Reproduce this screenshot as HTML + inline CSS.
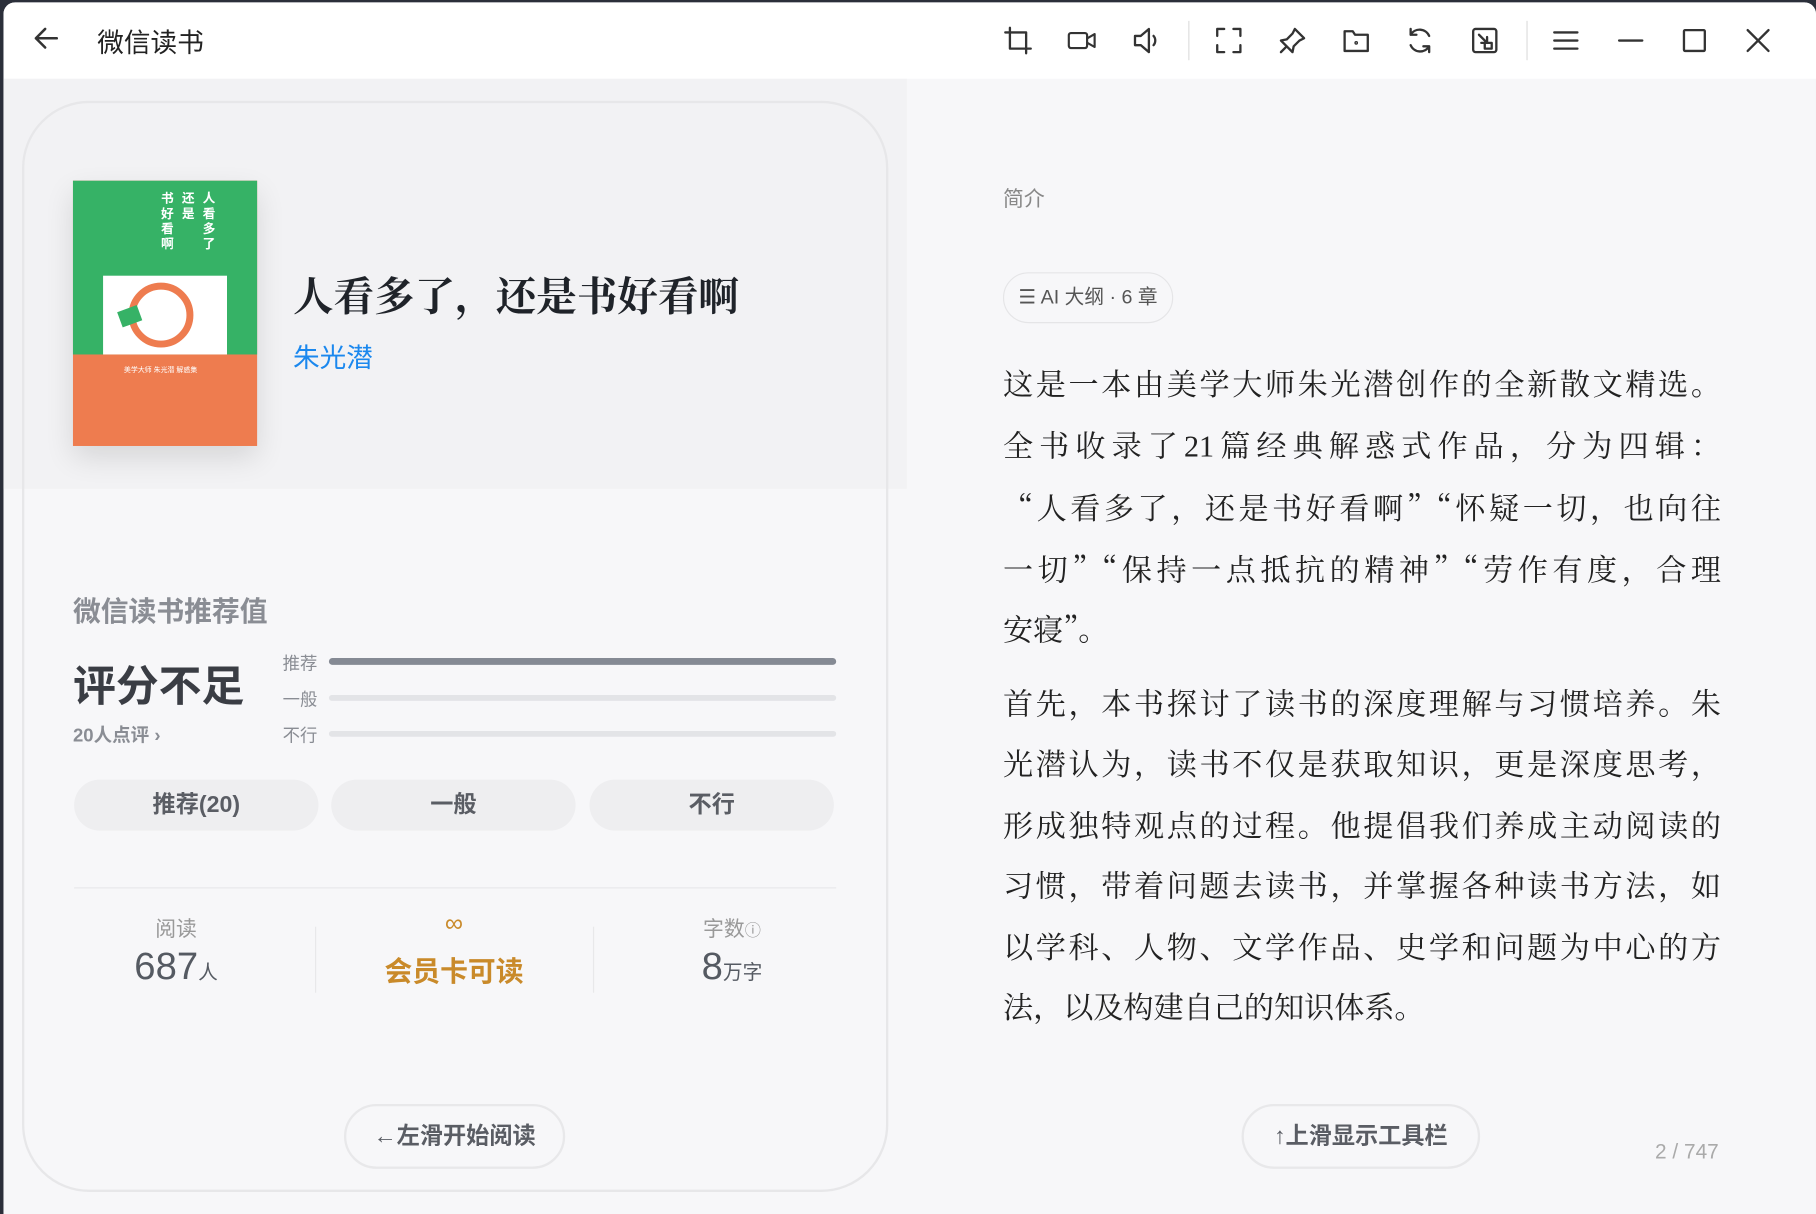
<!DOCTYPE html>
<html><head><meta charset="utf-8"><style>
*{margin:0;padding:0;box-sizing:border-box}
html,body{width:1816px;height:1214px;overflow:hidden;background:#2b2f3a}
#w{position:absolute;left:0;top:0;width:1568px;height:1048px;transform:scale(1.15816,1.15840);transform-origin:0 0;font-family:"Liberation Sans","Noto Sans CJK SC",sans-serif}
.win{position:absolute;left:3px;top:2px;width:1565px;height:1046px;background:#f7f7f9;border-radius:10px 10px 0 0;overflow:hidden}
.bar{position:absolute;left:0;top:0;width:100%;height:66px;background:#fff}
.a{position:absolute;white-space:nowrap}
.ic{position:absolute;top:20px;width:26px;height:26px}
.ic svg{width:26px;height:26px;fill:none;stroke:#333;stroke-width:2;stroke-linecap:round;stroke-linejoin:round}
.sep{position:absolute;top:16px;width:1px;height:34px;background:#ddd}
.ser{font-family:"Liberation Serif","Noto Serif CJK SC",serif}
.q{font-family:"Noto Serif CJK SC",serif}
.btn{position:absolute;top:671px;height:44px;width:211px;border-radius:22px;background:#eeeef0;color:#5a5d64;font-size:20px;line-height:44px;text-align:center;font-weight:bold}
.bg{position:absolute;height:5px;border-radius:3px;background:#e3e4e7;left:281px;width:438px}
.lb{position:absolute;left:241px;font-size:15px;color:#8a8d94}
.p div{text-align:justify;text-align-last:justify;height:52.5px;line-height:52.5px}
.p div.l{text-align-last:left}
</style></head><body><div id="w"><div class="win">
<div class="bar">
<div class="a" style="left:24px;top:18px"><svg width="26" height="26" viewBox="0 0 26 26" fill="none" stroke="#333" stroke-width="2.2" stroke-linecap="round" stroke-linejoin="round"><path d="M22 13H4M12 5l-8 8 8 8"/></svg></div>
<div class="a" style="left:81px;top:16px;font-size:23px;color:#222">微信读书</div>
<div class="ic" style="left:863px"><svg viewBox="0 0 26 26"><path d="M6 2v18h18M2 6h18v18"/></svg></div>
<div class="ic" style="left:918px"><svg viewBox="0 0 28 26"><rect x="2" y="6" width="17" height="14" rx="2"/><path d="M19 11l7-4v12l-7-4"/></svg></div>
<div class="ic" style="left:974px"><svg viewBox="0 0 26 26"><path d="M3 9h5l7-6v20l-7-6H3z"/><path d="M19 9c2 2 2 6 0 8"/></svg></div>
<div class="sep" style="left:1023px"></div>
<div class="ic" style="left:1045px"><svg viewBox="0 0 26 26"><path d="M3 9V3h6M17 3h6v6M23 17v6h-6M9 23H3v-6"/></svg></div>
<div class="ic" style="left:1100px"><svg viewBox="0 0 26 26"><path d="M15 3l8 8-4 2-5 5-1 5-10-10 5-1 5-5zM8 18l-5 5"/></svg></div>
<div class="ic" style="left:1155px"><svg viewBox="0 0 26 26"><path d="M3 5h7l2 3h11v14H3z"/><circle cx="13" cy="15" r="0.6"/></svg></div>
<div class="ic" style="left:1210px"><svg viewBox="0 0 26 26"><path d="M21 9a9 9 0 0 0-16-1M5 17a9 9 0 0 0 16 1M5 3v5h5M21 23v-5h-5"/></svg></div>
<div class="ic" style="left:1266px"><svg viewBox="0 0 26 26"><rect x="3" y="3" width="20" height="20" rx="2"/><path d="M8 8l7 7M15 10v5h-5"/><rect x="13" y="15" width="6" height="5"/></svg></div>
<div class="sep" style="left:1315px"></div>
<div class="ic" style="left:1336px"><svg viewBox="0 0 26 26"><path d="M3 6h20M3 13h20M3 20h20"/></svg></div>
<div class="ic" style="left:1392px"><svg viewBox="0 0 26 26"><path d="M3 13h20"/></svg></div>
<div class="ic" style="left:1447px"><svg viewBox="0 0 26 26"><rect x="4" y="4" width="18" height="18" rx="1"/></svg></div>
<div class="ic" style="left:1502px"><svg viewBox="0 0 26 26"><path d="M4 4l18 18M22 4L4 22"/></svg></div>
</div>
<div class="a" style="left:-3px;top:66px;width:783px;height:354px;background:#f2f2f4"></div>
<div class="a" style="left:16px;top:85px;width:748px;height:942px;border:2px solid #e7e7e9;border-radius:58px"></div>
<div class="a" style="left:60px;top:154px;width:159px;height:229px;box-shadow:0 10px 24px rgba(0,0,0,.12);background:#ee7c4f">
<div class="a" style="left:0;top:0;width:159px;height:150px;background:#36b266"></div>
<div class="a" style="left:26px;top:82px;width:107px;height:68px;background:#fff"></div>
<div class="a" style="left:48px;top:88px;width:56px;height:56px;border-radius:50%;border:6px solid #ee7c4f"></div>
<div class="a" style="left:40px;top:110px;width:18px;height:14px;background:#36b266;transform:rotate(-20deg)"></div>
<div class="a" style="left:112px;top:10px;width:14px;font-size:11px;line-height:13px;color:#fff;white-space:normal;font-weight:bold">人看多了</div>
<div class="a" style="left:94px;top:10px;width:14px;font-size:11px;line-height:13px;color:#fff;white-space:normal;font-weight:bold">还是</div>
<div class="a" style="left:76px;top:10px;width:14px;font-size:11px;line-height:13px;color:#fff;white-space:normal;font-weight:bold">书好看啊</div>
<div class="a" style="left:44px;top:158px;font-size:6px;color:#fff">美学大师 朱光潜 解惑集</div>
</div>
<div class="a ser" style="left:250px;top:227px;font-size:35px;font-weight:bold;color:#1f2329">人看多了，还是书好看啊</div>
<div class="a" style="left:250px;top:288px;font-size:23px;color:#1b88ee">朱光潜</div>
<div class="a" style="left:60px;top:506px;font-size:24px;font-weight:bold;color:#8a8d94">微信读书推荐值</div>
<div class="a" style="left:60px;top:560px;font-size:37px;font-weight:bold;color:#3a3d44">评分不足</div>
<div class="a" style="left:60px;top:619px;font-size:16px;font-weight:bold;color:#8a8d94">20人点评 ›</div>
<div class="lb" style="top:560px">推荐</div><div class="lb" style="top:591px">一般</div><div class="lb" style="top:622px">不行</div>
<div class="bg" style="top:566px;height:6px;background:#858a94"></div>
<div class="bg" style="top:598px"></div>
<div class="bg" style="top:629px"></div>
<div class="btn" style="left:61px">推荐(20)</div>
<div class="btn" style="left:283px">一般</div>
<div class="btn" style="left:506px">不行</div>
<div class="a" style="left:61px;top:764px;width:658px;height:1px;background:#e8e8ea"></div>
<div class="a" style="left:269px;top:798px;width:1px;height:57px;background:#e8e8ea"></div>
<div class="a" style="left:509px;top:798px;width:1px;height:57px;background:#e8e8ea"></div>
<div class="a" style="left:89px;top:786px;width:120px;text-align:center;font-size:18px;color:#999">阅读</div>
<div class="a" style="left:89px;top:813px;width:120px;text-align:center;font-size:33px;color:#555a62">687<span style="font-size:17px">人</span></div>
<div class="a" style="left:329px;top:782px;width:120px;text-align:center;font-size:22px;color:#c98a2a">∞</div>
<div class="a" style="left:309px;top:817px;width:160px;text-align:center;font-size:24px;font-weight:bold;color:#c98a2a">会员卡可读</div>
<div class="a" style="left:569px;top:786px;width:120px;text-align:center;font-size:18px;color:#999">字数<span style="font-size:14px">ⓘ</span></div>
<div class="a" style="left:569px;top:813px;width:120px;text-align:center;font-size:33px;color:#555a62">8<span style="font-size:17px">万字</span></div>
<div class="a" style="left:294px;top:951px;width:191px;height:56px;border:2px solid #e8e8ea;border-radius:28px;text-align:center;line-height:52px;font-size:20px;font-weight:bold;color:#5a5d64">←左滑开始阅读</div>
<div class="a" style="left:863px;top:156px;font-size:18px;color:#888">简介</div>
<div class="a" style="left:863px;top:233px;width:147px;height:44px;border:1px solid #e5e5e7;border-radius:22px;font-size:17px;color:#555;line-height:42px;text-align:center">☰ AI 大纲 · 6 章</div>
<div class="a p ser" style="left:863px;top:305px;width:620px;font-size:26px;color:#222">
<div>这是一本由美学大师朱光潜创作的全新散文精选。</div>
<div>全书收录了21篇经典解惑式作品，分为四辑：</div>
<div><span class="q">“</span>人看多了，还是书好看啊<span class="q">”“</span>怀疑一切，也向往</div>
<div>一切<span class="q">”“</span>保持一点抵抗的精神<span class="q">”“</span>劳作有度，合理</div>
<div class="l">安寝<span class="q">”</span>。</div>
<div style="height:13px"></div>
<div>首先，本书探讨了读书的深度理解与习惯培养。朱</div>
<div>光潜认为，读书不仅是获取知识，更是深度思考，</div>
<div>形成独特观点的过程。他提倡我们养成主动阅读的</div>
<div>习惯，带着问题去读书，并掌握各种读书方法，如</div>
<div>以学科、人物、文学作品、史学和问题为中心的方</div>
<div class="l">法，以及构建自己的知识体系。</div>
</div>
<div class="a" style="left:1069px;top:951px;width:206px;height:56px;border:2px solid #e8e8ea;border-radius:28px;text-align:center;line-height:52px;font-size:20px;font-weight:bold;color:#5a5d64">↑上滑显示工具栏</div>
<div class="a" style="left:1426px;top:982px;font-size:18px;color:#aaa">2 / 747</div>
</div></div></body></html>
